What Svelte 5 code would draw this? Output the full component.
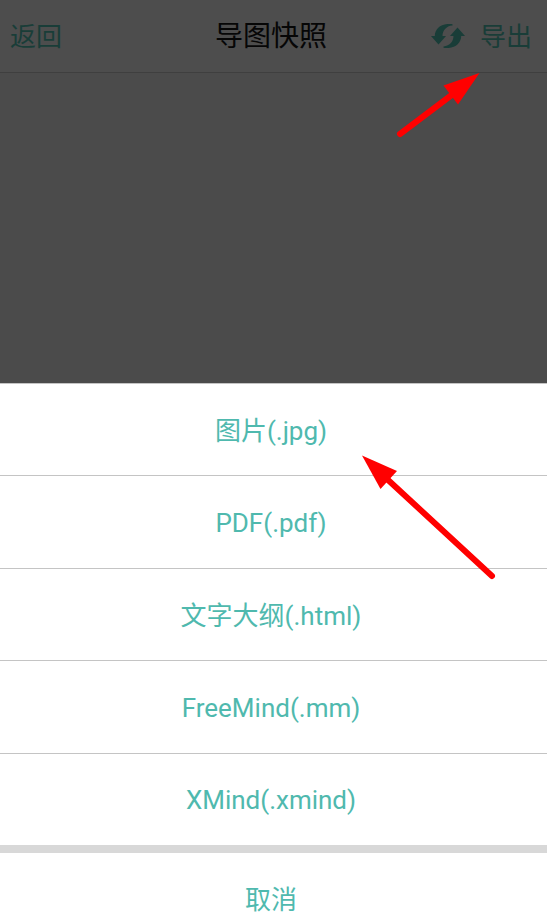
<script>
  const formats = [
    "图片(.jpg)",
    "PDF(.pdf)",
    "文字大纲(.html)",
    "FreeMind(.mm)",
    "XMind(.xmind)",
  ];
</script>

<div class="page">
  <header>
    <button class="back">返回</button>
    <h1>导图快照</h1>
    <div class="actions">
      <button class="refresh" aria-label="刷新">
        <svg viewBox="0 0 34 24" width="34" height="24">
          <path d="M21.500 0.300C11 -1.500 4 4 3.800 12H0L7.500 20.500L15 12H11.500C11.500 7 15 2 21.500 1.600Z" />
          <path d="M12.500 23.700C23 25.500 30 20 30.200 12H34L26.500 3.500L19 12H22.500C22.500 17 19 22 12.500 22.400Z" />
        </svg>
      </button>
      <button>导出</button>
    </div>
  </header>

  <main></main>

  <div class="sheet">
    <ul>
      {#each formats as format}
        <li><button>{format}</button></li>
      {/each}
    </ul>
    <button class="cancel">取消</button>
  </div>

  <svg class="arrows" width="547" height="923" viewBox="0 0 547 923" aria-hidden="true">
    <path class="shaft" d="M400 134L453 94M492 576L387 479" />
    <path d="M479.500 73L443.500 85.500L458 104.500Z" />
    <path d="M362 455.500L397 471L380.500 489Z" />
  </svg>
</div>

<style>
  :global(body) {
    margin: 0;
    background: #4b4b4b;
  }

  .page {
    position: relative;
    display: flex;
    flex-direction: column;
    min-height: 100vh;
    overflow: hidden;
    font-family: Roboto, "Noto Sans CJK SC", sans-serif;
  }

  button {
    padding: 0;
    border: 0;
    background: none;
    color: inherit;
    font: inherit;
    font-size: 26px;
    line-height: 32px;
    cursor: pointer;
  }

  header {
    box-sizing: border-box;
    display: grid;
    grid-template-columns: 1fr auto 1fr;
    align-items: center;
    height: 73px;
    padding: 2px 15px 0 10px;
    border-bottom: 1px solid #3f3f3f;
    background: #4d4d4d;
    color: #193d38;
  }

  .back {
    justify-self: start;
  }

  h1 {
    margin: 0;
    color: #060606;
    font-size: 28px;
    font-weight: 400;
    line-height: 32px;
  }

  .actions {
    display: flex;
    justify-content: flex-end;
    align-items: center;
    gap: 15px;
  }

  .refresh {
    display: flex;
    padding-bottom: 2px;
  }

  .refresh svg {
    fill: currentColor;
  }

  main {
    flex: 1;
  }

  .sheet {
    border-top: 1px solid #c4c4c4;
    background: #fff;
    color: #4fb9ae;
  }

  ul {
    display: flex;
    flex-direction: column;
    height: 461px;
    margin: 0;
    padding: 0;
    list-style: none;
  }

  li {
    display: flex;
    flex: 1;
  }

  li + li {
    border-top: 1px solid #c4c4c4;
  }

  li button {
    flex: 1;
    padding: 2px 5px 0 0;
  }

  .cancel {
    display: block;
    width: 100%;
    padding: 31px 5px 7px 0;
    border-top: 8px solid #d8d8d8;
  }

  .arrows {
    position: absolute;
    top: 0;
    left: 0;
    fill: #f00;
    pointer-events: none;
  }

  .shaft {
    fill: none;
    stroke: #f00;
    stroke-width: 6;
    stroke-linecap: round;
  }
</style>
